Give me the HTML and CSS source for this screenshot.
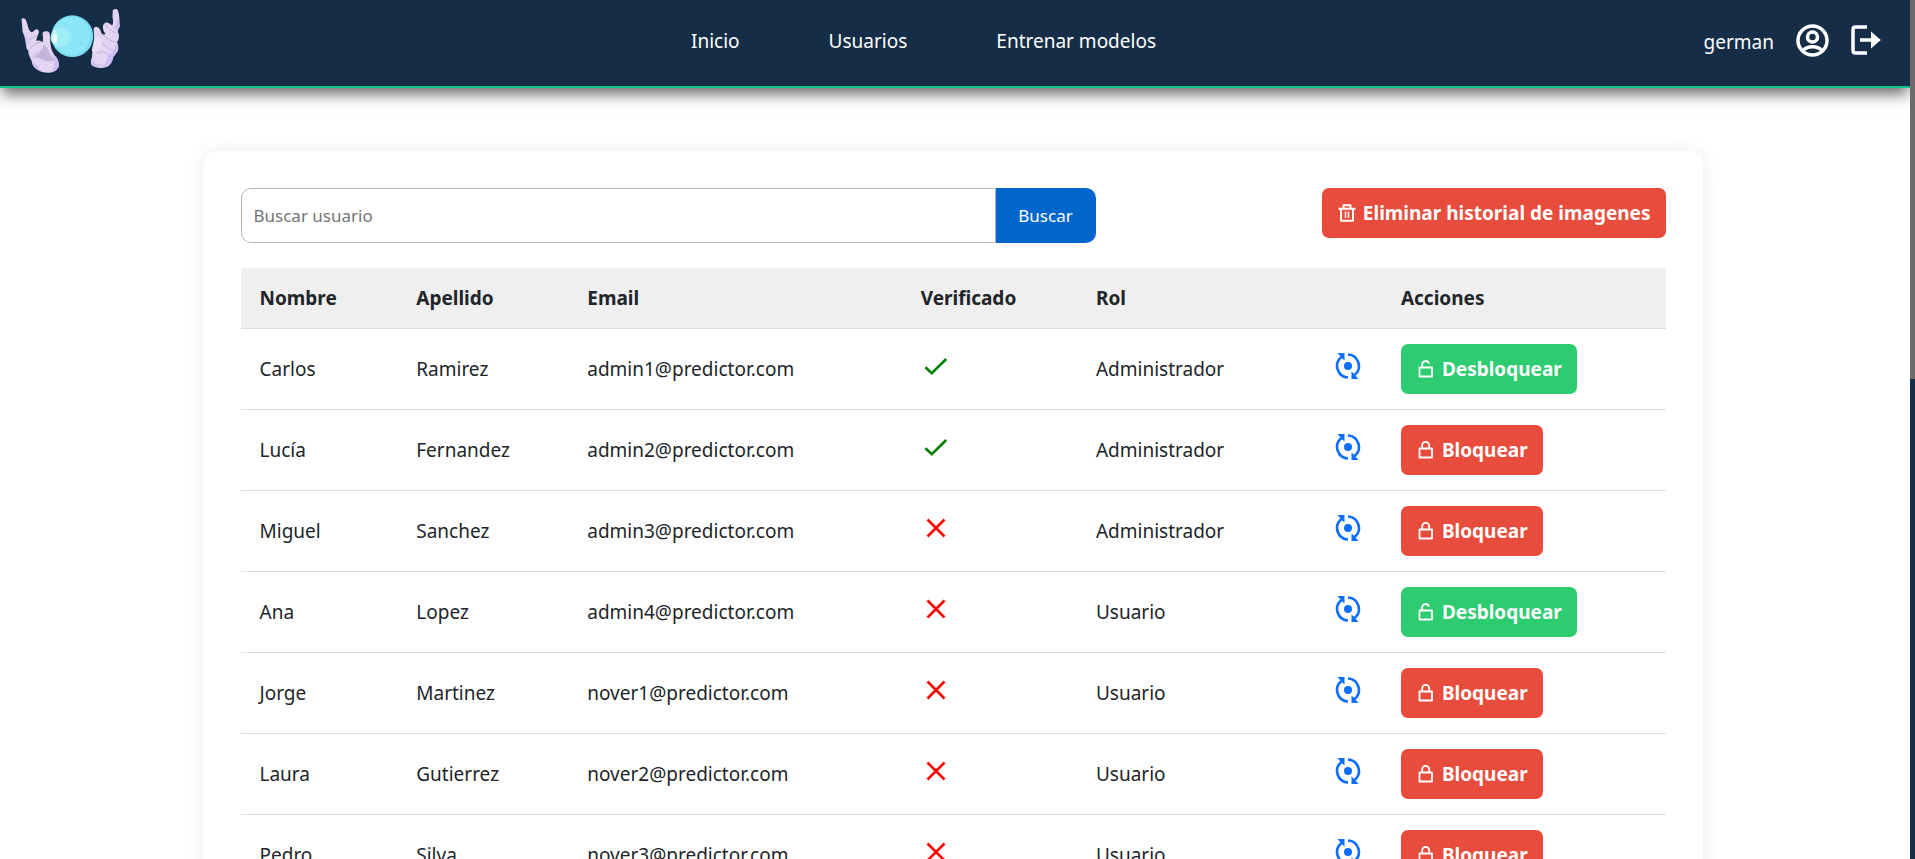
FILE: index.html
```html
<!DOCTYPE html>
<html lang="es">
<head>
<meta charset="utf-8">
<meta name="viewport" content="width=device-width, initial-scale=1">
<title>Usuarios</title>
<link rel="stylesheet" href="styles.css">
</head>
<body>
<svg class="sprite" aria-hidden="true">
  <symbol id="check" viewBox="0 0 24 24"><path d="M1.4 13.2l6.4 6L22.2 5" fill="none" stroke="currentColor" stroke-width="2.6"/></symbol>
  <symbol id="cross" viewBox="0 0 24 24"><path d="M3.5 3.5l17 17M20.500 3.500l-17 17" fill="none" stroke="currentColor" stroke-width="2.600"/></symbol>
  <symbol id="sync" viewBox="0 0 26 26"><circle cx="13" cy="13" r="4" fill="currentColor"/><path d="M13 1.500a11.500 11.500 0 0 1 6.500 20.500M13 24.500A11.500 11.500 0 0 1 6.500 4" fill="none" stroke="currentColor" stroke-width="2.600"/><path d="M2.500 0H9.500V7.500L7 5.300 5.500 3.500ZM23.500 26H16.500V18.500L19 20.700 20.500 22.500Z" fill="currentColor"/></symbol>
  <symbol id="lock" viewBox="0 0 18 18"><path d="M2.500 7.500h12.500v9h-12.500zM5.200 7.500V4.400a3.500 3.500 0 0 1 7 0v3.100" fill="none" stroke="currentColor" stroke-width="1.800" stroke-linejoin="round"/></symbol>
  <symbol id="unlock" viewBox="0 0 18 18"><path d="M2.500 7.500h12.500v9h-12.500zM5.200 7.500V4.400a3.400 3.400 0 0 1 6.700-.8" fill="none" stroke="currentColor" stroke-width="1.800" stroke-linejoin="round"/></symbol>
  <symbol id="trash" viewBox="0 0 18 18"><path d="M.5 4.800h17M3 5v11.700h12V5M5.500 4.500V1.200h7v3.300" fill="none" stroke="currentColor" stroke-width="1.900" stroke-linejoin="round"/><path d="M7.500 7.500v6.500M10.500 7.500v6.500" stroke="currentColor" stroke-width="1.500"/></symbol>
</svg>

<header class="topbar">
  <a class="logo" href="#" aria-label="Predictor">
    <svg viewBox="60 20 306 202" class="logo-art" aria-hidden="true">
      <g id="left-hand">
        <path d="M64 58Q64 53 70 54 77 55 79 64L86 88Q93 100 99 94 108 83 115 90 118 96 112 107L108 122Q119 118 128 126 130 112 127 101 128 92 138 93 148 93 149 102L151 132Q153 151 162 164 179 180 176 200 169 216 148 218 126 219 111 209 96 199 95 184L85 162Q87 152 80 145L78 122 67 94Z" fill="#e3d5f1"/>
        <path d="M130 132Q144 140 149 162 162 173 163 181 140 187 124 178 114 171 105 174 99 174 111 163 128 152 130 132Z" fill="#c5b5dc"/>
        <path d="M162 165Q180 181 175 202 166 214 151 218 166 204 162 165M97 183Q110 195 124 214 101 208 97 183M70 94L82 119 80 139 87 155 79 145Z" fill="#cebdf5"/>
        <path d="M86 119Q99 113 109 105M89 146Q101 129 125 125M98 172Q105 158 127 151" fill="none" stroke="#bdaddd" stroke-width="3"/>
      </g>
      <path d="M339 30Q347 22 354 29 358 39 359 57L360 78Q353 88 355 98 359 103 357 116L352 126Q358 142 354 152 347 164 341 169 337 194 320 201 297 208 277 197 269 188 276 172L278 151Q277 139 284 125L281 86Q284 77 292 80 302 84 304 98 310 108 317 101L312 94Q306 80 312 71 319 63 329 70L337 76Q342 67 338 50Z" fill="#e3d5f1"/>
      <path d="M284 112Q297 104 306 123 309 138 293 153L280 159 276 150Z" fill="#eadff6"/>
      <path d="M354 55L360 79 353 92 341 80Q350 80 350 65ZM350 126Q361 145 350 158 344 169 341 169L336 185Q325 198 306 202 326 183 323 165L342 155ZM275 178Q289 199 311 192 291 207 275 195Z" fill="#cebdf5"/>
      <path d="M317 73Q326 90 350 98M310 103Q326 123 351 126M306 126Q321 148 350 154M291 160Q309 148 326 165" fill="none" stroke="#bdaddd" stroke-width="3"/>
      <circle cx="217" cy="108" r="63" fill="#7bdcf3"/>
      <circle cx="214" cy="107" r="57" fill="#8be6f8"/>
      <circle cx="181" cy="111" r="30" fill="#a0edf5"/>
      <ellipse cx="164" cy="114" rx="8" ry="15" fill="#e8feff"/>
      <circle cx="164" cy="93" r="4" fill="#d9fcff"/>
      <path d="M238 128l14 9-6-11" fill="#72d3ec"/>
    </svg>
  </a>
  <nav class="menu">
    <a href="#">Inicio</a>
    <a href="#">Usuarios</a>
    <a href="#">Entrenar modelos</a>
  </nav>
  <div class="account">
    <span class="account-name">german</span>
    <a class="account-link" href="#" aria-label="Perfil">
      <svg viewBox="0 0 33 33" class="icon-profile"><g fill="none" stroke="currentColor" stroke-width="3.500"><circle cx="16.500" cy="16.500" r="14.500"/><circle cx="16.500" cy="13" r="5"/><path d="M6.500 27Q10 22.800 16.500 22.800T26.500 27"/></g></svg>
    </a>
    <a class="account-link" href="#" aria-label="Cerrar sesión">
      <svg viewBox="0 0 30 30" class="icon-exit"><path d="M16 2H4.500Q2 2 2 4.500v21Q2 28 4.500 28H16" fill="none" stroke="currentColor" stroke-width="3.500"/><path d="M9 13.200h11V6.500l9.800 8.500-9.800 8.500v-6.700H9z" fill="currentColor"/></svg>
    </a>
  </div>
</header>

<main class="page">
  <section class="card">
    <div class="toolbar">
      <form class="search">
        <input class="search-input" type="text" placeholder="Buscar usuario" aria-label="Buscar usuario">
        <button class="search-button" type="button">Buscar</button>
      </form>
      <button class="btn btn-danger" type="button"><svg class="btn-icon"><use href="#trash"/></svg>Eliminar historial de imagenes</button>
    </div>
    <table class="users">
      <colgroup><col class="c-name"><col class="c-surname"><col class="c-email"><col class="c-verified"><col class="c-role"><col class="c-sync"><col></colgroup>
      <thead>
        <tr><th>Nombre</th><th>Apellido</th><th>Email</th><th>Verificado</th><th>Rol</th><th></th><th>Acciones</th></tr>
      </thead>
      <tbody>
        <tr><td>Carlos</td><td>Ramirez</td><td>admin1@predictor.com</td><td><svg class="mark yes" role="img" aria-label="Sí"><use href="#check"/></svg></td><td>Administrador</td><td><button class="sync" type="button" aria-label="Cambiar rol"><svg class="sync-icon"><use href="#sync"/></svg></button></td><td><button class="btn btn-success" type="button"><svg class="btn-icon"><use href="#unlock"/></svg>Desbloquear</button></td></tr>
        <tr><td>Lucía</td><td>Fernandez</td><td>admin2@predictor.com</td><td><svg class="mark yes" role="img" aria-label="Sí"><use href="#check"/></svg></td><td>Administrador</td><td><button class="sync" type="button" aria-label="Cambiar rol"><svg class="sync-icon"><use href="#sync"/></svg></button></td><td><button class="btn btn-danger" type="button"><svg class="btn-icon"><use href="#lock"/></svg>Bloquear</button></td></tr>
        <tr><td>Miguel</td><td>Sanchez</td><td>admin3@predictor.com</td><td><svg class="mark no" role="img" aria-label="No"><use href="#cross"/></svg></td><td>Administrador</td><td><button class="sync" type="button" aria-label="Cambiar rol"><svg class="sync-icon"><use href="#sync"/></svg></button></td><td><button class="btn btn-danger" type="button"><svg class="btn-icon"><use href="#lock"/></svg>Bloquear</button></td></tr>
        <tr><td>Ana</td><td>Lopez</td><td>admin4@predictor.com</td><td><svg class="mark no" role="img" aria-label="No"><use href="#cross"/></svg></td><td>Usuario</td><td><button class="sync" type="button" aria-label="Cambiar rol"><svg class="sync-icon"><use href="#sync"/></svg></button></td><td><button class="btn btn-success" type="button"><svg class="btn-icon"><use href="#unlock"/></svg>Desbloquear</button></td></tr>
        <tr><td>Jorge</td><td>Martinez</td><td>nover1@predictor.com</td><td><svg class="mark no" role="img" aria-label="No"><use href="#cross"/></svg></td><td>Usuario</td><td><button class="sync" type="button" aria-label="Cambiar rol"><svg class="sync-icon"><use href="#sync"/></svg></button></td><td><button class="btn btn-danger" type="button"><svg class="btn-icon"><use href="#lock"/></svg>Bloquear</button></td></tr>
        <tr><td>Laura</td><td>Gutierrez</td><td>nover2@predictor.com</td><td><svg class="mark no" role="img" aria-label="No"><use href="#cross"/></svg></td><td>Usuario</td><td><button class="sync" type="button" aria-label="Cambiar rol"><svg class="sync-icon"><use href="#sync"/></svg></button></td><td><button class="btn btn-danger" type="button"><svg class="btn-icon"><use href="#lock"/></svg>Bloquear</button></td></tr>
        <tr><td>Pedro</td><td>Silva</td><td>nover3@predictor.com</td><td><svg class="mark no" role="img" aria-label="No"><use href="#cross"/></svg></td><td>Usuario</td><td><button class="sync" type="button" aria-label="Cambiar rol"><svg class="sync-icon"><use href="#sync"/></svg></button></td><td><button class="btn btn-danger" type="button"><svg class="btn-icon"><use href="#lock"/></svg>Bloquear</button></td></tr>
      </tbody>
    </table>
  </section>
</main>
<div class="scroll-track" aria-hidden="true"><div class="scroll-thumb"></div></div>
</body>
</html>
```
FILE: styles.css
```css
* { box-sizing: border-box; }

body {
  margin: 0;
  padding-right: 5px;
  height: 100vh;
  overflow: hidden;
  background: #fff;
  color: #212529;
  font: 19px/30px "Segoe UI", "Noto Sans", "Open Sans", sans-serif;
}

button, input { font: inherit; }
svg { display: block; }
.sprite { position: absolute; width: 0; height: 0; }

.topbar {
  position: relative;
  display: grid;
  grid-template-columns: 1fr auto 1fr;
  align-items: center;
  height: 88px;
  padding: 0 29px 6px 20px;
  background: #152d46;
  border-bottom: 2px solid #0dc48f;
  box-shadow: 0 8px 14px -2px rgba(0, 0, 0, .6);
  color: #fff;
}
.topbar a { color: inherit; text-decoration: none; }
.logo { justify-self: start; }
.logo-art { width: 102px; height: 67px; }
.menu { display: flex; gap: 89px; margin-right: 54px; padding-top: 2px; }
.account { display: flex; align-items: center; justify-self: end; }
.account-name { padding-top: 3px; }
.account-link { margin-left: 22px; }
.icon-profile { width: 33px; height: 33px; }
.icon-exit { width: 30px; height: 30px; }

.page { padding: 63px 5px 40px 0; }
.card {
  width: 80%;
  max-width: 1500px;
  margin: 0 auto;
  padding: 37px 37px 37px 38px;
  border-radius: 15px;
  background: #fff;
  box-shadow: 0 0 20px rgba(0, 0, 0, .08);
}

.toolbar {
  display: flex;
  justify-content: space-between;
  align-items: flex-start;
  margin-bottom: 25px;
}
.search { display: flex; width: 60%; height: 55px; font-size: 17px; }
.search-input {
  flex: 1;
  min-width: 0;
  padding: 0 12px;
  border: 1px solid #b5b5b5;
  border-radius: 10px 0 0 10px;
  background: #fff;
  color: #212529;
}
.search-input::placeholder { color: #757575; }
.search-button {
  width: 100px;
  border: 0;
  border-radius: 0 10px 10px 0;
  background: #0066cc;
  color: #fff;
}

.btn {
  display: inline-flex;
  align-items: center;
  gap: 7px;
  height: 50px;
  padding: 0 15px 0 16px;
  border: 0;
  border-radius: 7px;
  color: #fff;
  font-weight: 700;
  white-space: nowrap;
}
.btn-icon { width: 18px; height: 18px; }
.btn-danger { background: #e74c3c; }
.btn-success { background: #2ecc71; }

.users { width: 100%; border-collapse: collapse; table-layout: fixed; }
.c-name { width: 11%; }
.c-surname { width: 12%; }
.c-email { width: 23.4%; }
.c-verified { width: 12.3%; }
.c-role { width: 16.8%; }
.c-sync { width: 4.6%; }
.users th, .users td {
  padding: 0 0 0 19px;
  border-bottom: 1px solid #dcdcdc;
  text-align: left;
  vertical-align: middle;
}
.users th { height: 60px; background: #efefef; font-weight: 700; }
.users td { height: 81px; }
.users .btn { display: flex; }
.mark { width: 24px; height: 24px; margin: 0 0 6px 3px; }
.yes { color: #008000; }
.no { color: #f00; }
.sync {
  display: block;
  margin-bottom: 6px;
  padding: 0;
  border: 0;
  background: none;
  color: #0d6efd;
}
.sync-icon { width: 26px; height: 26px; }

.scroll-track {
  position: fixed;
  inset: 0 0 0 auto;
  width: 5px;
  background: #152d46;
}
.scroll-thumb { height: 44.1%; background: #6b6b6b; }
```
